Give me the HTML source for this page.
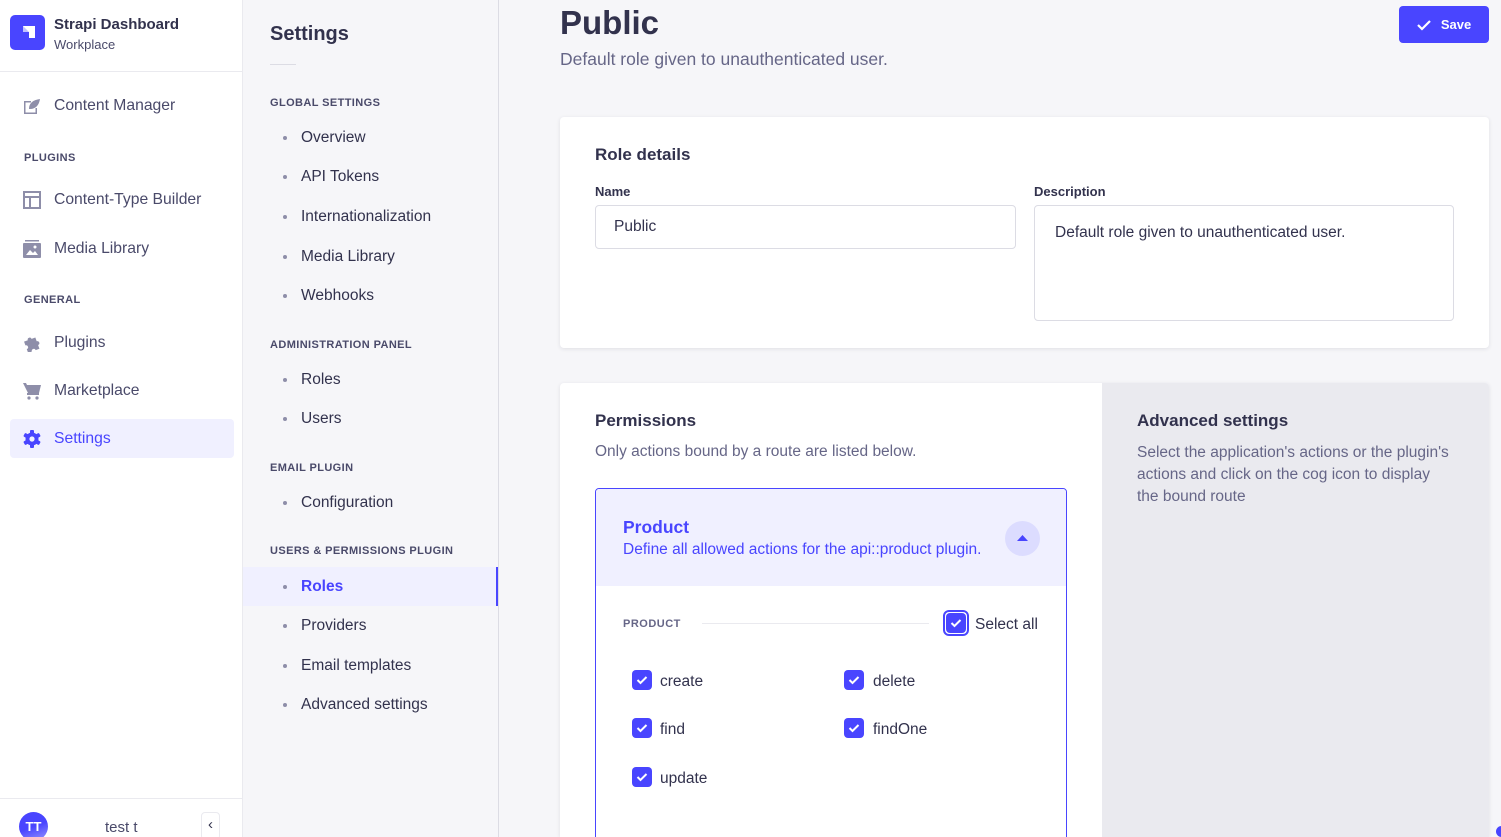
<!DOCTYPE html>
<html><head><meta charset="utf-8"><style>
*{box-sizing:border-box;margin:0;padding:0}
html,body{width:1501px;height:837px;overflow:hidden}
body{background:#f6f6f9;font-family:"Liberation Sans",sans-serif;color:#32324d;position:relative}
.abs{position:absolute}
.nav{left:0;top:0;width:243px;height:837px;background:#fff;border-right:1px solid #eaeaef}
.navitem{position:absolute;left:10px;width:224px;height:39px;display:flex;align-items:center;padding-left:13px;font-size:15.7px;color:#4a4a6a}
.navitem svg{margin-right:13px}
.sec{position:absolute;left:24px;font-size:11px;font-weight:bold;color:#4a4a6a;letter-spacing:.4px}
.sub{left:243px;top:0;width:256px;height:837px;background:#f6f6f9;border-right:1px solid #dcdce4}
.sh{position:absolute;left:27px;font-size:11px;font-weight:bold;color:#4a4a6a;letter-spacing:.4px}
.si{position:absolute;left:0;width:255px;height:38px;display:flex;align-items:center;padding-left:40px;font-size:15.5px;color:#32324d}
.si:before{content:"";position:absolute;left:40px;width:4px;height:4px;border-radius:50%;background:#8e8ea9}
.si span{margin-left:18px}
.card{background:#fff;border-radius:4px;box-shadow:0 1px 4px rgba(33,33,52,.1)}
.lbl{font-size:13px;font-weight:bold;color:#32324d}
.inp{border:1px solid #dcdce4;border-radius:4px;background:#fff;font-size:15.5px;color:#32324d}
.cb{position:absolute;width:20px;height:20px;border-radius:4px;background:#4945ff;display:flex;align-items:center;justify-content:center}
.cbl{position:absolute;font-size:15.5px;color:#32324d}
</style></head><body>
<div class="abs nav">
  <div class="abs" style="left:10px;top:15px;width:35px;height:35px;background:#4945ff;border-radius:5px">
    <svg width="35" height="35" viewBox="0 0 35 35"><path d="M13 11h12v12h-6v-6h-6z" fill="#fff"/><path d="M13 11v6h6z" fill="#c0c0ff"/></svg>
  </div>
  <div class="abs" style="left:54px;top:16px;font-size:15px;font-weight:bold;color:#32324d">Strapi Dashboard</div>
  <div class="abs" style="left:54px;top:37px;font-size:13px;color:#4a4a6a">Workplace</div>
  <div class="abs" style="left:0;top:71px;width:242px;height:1px;background:#eaeaef"></div>
  <div class="navitem" style="top:86px"><svg width="18" height="18" viewBox="0 0 18 18"><path d="M1 4h7v1.5H2.5v10h10V11H14v6H1z M6 12c0-6 4-9 11-10-1 6-4 10-10 10z" fill="#8e8ea9"/></svg>Content Manager</div>
  <div class="sec" style="top:152px">PLUGINS</div>
  <div class="navitem" style="top:180px"><svg width="18" height="18" viewBox="0 0 18 18"><path d="M0 0h18v18H0zM2 2v3h14V2zM2 7v9h4V7zM8 7v9h8V7z" fill="#8e8ea9" fill-rule="evenodd"/></svg>Content-Type Builder</div>
  <div class="navitem" style="top:229px"><svg width="18" height="18" viewBox="0 0 18 18"><rect x="2" y="0" width="14" height="1.5" fill="#8e8ea9"/><rect x="0" y="3" width="18" height="15" rx="1" fill="#8e8ea9"/><path d="M3 15l4-5 3 3 2-2 3 4z" fill="#fff"/><circle cx="12" cy="7" r="1.5" fill="#fff"/></svg>Media Library</div>
  <div class="sec" style="top:294px">GENERAL</div>
  <div class="navitem" style="top:323px"><svg width="18" height="18" viewBox="0 0 18 18"><path d="M2 5h4a2 2 0 1 1 4 0h4v4a2 2 0 1 1 0 4v4h-4a2 2 0 1 0-4 0H2v-4a2 2 0 1 0 0-4z" fill="#8e8ea9" transform="rotate(-20 9 9)"/></svg>Plugins</div>
  <div class="navitem" style="top:371px"><svg width="18" height="18" viewBox="0 0 18 18"><path d="M0 1h3l1 2h14l-2 8H5z" fill="#8e8ea9"/><path d="M4 11h12v2H4z" fill="#8e8ea9"/><circle cx="6" cy="16" r="1.6" fill="#8e8ea9"/><circle cx="14" cy="16" r="1.6" fill="#8e8ea9"/></svg>Marketplace</div>
  <div class="navitem" style="top:419px;background:#f0f0ff;color:#4945ff;border-radius:4px"><svg width="18" height="18" viewBox="0 0 18 18"><circle cx="9" cy="9" r="6.5" fill="#4945ff"/><g fill="#4945ff"><rect x="7" y="0" width="4" height="18" rx="1"/><rect x="7" y="0" width="4" height="18" rx="1" transform="rotate(60 9 9)"/><rect x="7" y="0" width="4" height="18" rx="1" transform="rotate(120 9 9)"/></g><circle cx="9" cy="9" r="2.6" fill="#f0f0ff"/></svg>Settings</div>
  <div class="abs" style="left:0;top:798px;width:242px;height:1px;background:#eaeaef"></div>
  <div class="abs" style="left:19px;top:812px;width:29px;height:29px;border-radius:50%;background:linear-gradient(160deg,#4945ff 50%,#9a98ff);color:#fff;font-size:13px;font-weight:bold;text-align:center;line-height:29px">TT</div>
  <div class="abs" style="left:105px;top:819px;font-size:15px;color:#4a4a6a">test t</div>
  <div class="abs" style="left:201px;top:812px;width:19px;height:28px;border:1px solid #eaeaef;border-radius:4px;background:#fff;font-size:15px;color:#32324d;text-align:center;line-height:24px">&#8249;</div>
</div>
<div class="abs sub">
  <div class="abs" style="left:27px;top:23px;font-size:20px;font-weight:bold;color:#32324d">Settings</div>
  <div class="abs" style="left:27px;top:64px;width:26px;height:1px;background:#dcdce4"></div>
  <div class="sh" style="top:97px">GLOBAL SETTINGS</div>
  <div class="si" style="top:119px"><span>Overview</span></div>
  <div class="si" style="top:158px"><span>API Tokens</span></div>
  <div class="si" style="top:198px"><span>Internationalization</span></div>
  <div class="si" style="top:238px"><span>Media Library</span></div>
  <div class="si" style="top:277px"><span>Webhooks</span></div>
  <div class="sh" style="top:339px">ADMINISTRATION PANEL</div>
  <div class="si" style="top:361px"><span>Roles</span></div>
  <div class="si" style="top:400px"><span>Users</span></div>
  <div class="sh" style="top:462px">EMAIL PLUGIN</div>
  <div class="si" style="top:484px"><span>Configuration</span></div>
  <div class="sh" style="top:545px">USERS &amp; PERMISSIONS PLUGIN</div>
  <div class="si" style="top:567px;height:39px;background:#f0f0ff;color:#4945ff;border-right:2px solid #4945ff"><span style="font-weight:bold">Roles</span></div>
  <div class="si" style="top:607px"><span>Providers</span></div>
  <div class="si" style="top:647px"><span>Email templates</span></div>
  <div class="si" style="top:686px"><span>Advanced settings</span></div>
</div>
<div class="abs" style="left:560px;top:4px;font-size:33px;font-weight:bold;color:#32324d">Public</div>
<div class="abs" style="left:560px;top:49px;font-size:17.5px;color:#666687">Default role given to unauthenticated user.</div>
<div class="abs" style="left:1399px;top:6px;width:90px;height:37px;background:#4945ff;border-radius:4px;color:#fff;font-size:13px;font-weight:bold;display:flex;align-items:center;justify-content:center"><svg width="14" height="12" viewBox="0 0 14 12" style="margin-right:10px"><path d="M1 6l4 4 8-8" stroke="#fff" stroke-width="2.2" fill="none"/></svg>Save</div>

<div class="abs card" style="left:560px;top:117px;width:929px;height:231px">
  <div class="abs" style="left:35px;top:28px;font-size:17px;font-weight:bold">Role details</div>
  <div class="abs lbl" style="left:35px;top:67px">Name</div>
  <div class="abs inp" style="left:35px;top:88px;width:421px;height:44px;padding:12px 18px">Public</div>
  <div class="abs lbl" style="left:474px;top:67px">Description</div>
  <div class="abs inp" style="left:474px;top:88px;width:420px;height:116px;padding:18px 20px">Default role given to unauthenticated user.</div>
</div>

<div class="abs card" style="left:560px;top:383px;width:929px;height:454px;overflow:hidden;border-radius:4px 4px 0 0">
  <div class="abs" style="left:542px;top:0;width:387px;height:454px;background:#eaeaef"></div>
  <div class="abs" style="left:35px;top:28px;font-size:17px;font-weight:bold">Permissions</div>
  <div class="abs" style="left:35px;top:60px;font-size:15.5px;color:#666687">Only actions bound by a route are listed below.</div>
  <div class="abs" style="left:577px;top:28px;font-size:17px;font-weight:bold">Advanced settings</div>
  <div class="abs" style="left:577px;top:59px;width:318px;font-size:15.5px;line-height:22px;color:#666687">Select the application's actions or the plugin's actions and click on the cog icon to display the bound route</div>
  <div class="abs" style="left:35px;top:105px;width:472px;height:400px;border:1px solid #4945ff;border-radius:4px;overflow:hidden">
    <div class="abs" style="left:0;top:0;width:472px;height:97px;background:#f0f0ff"></div>
    <div class="abs" style="left:27px;top:28px;font-size:17.5px;font-weight:bold;color:#4945ff">Product</div>
    <div class="abs" style="left:27px;top:52px;font-size:15.5px;color:#4945ff">Define all allowed actions for the api::product plugin.</div>
    <div class="abs" style="left:409px;top:32px;width:35px;height:35px;border-radius:50%;background:#dcdcff"><svg width="35" height="35" viewBox="0 0 35 35"><path d="M12 20l5.5-6 5.5 6z" fill="#4945ff"/></svg></div>
    <div class="abs" style="left:27px;top:129px;font-size:11px;font-weight:bold;color:#666687;letter-spacing:.5px">PRODUCT</div>
    <div class="abs" style="left:106px;top:134px;width:227px;height:1px;background:#eaeaef"></div>
    <div class="abs" style="left:347px;top:121px;width:26px;height:26px;border:2px solid #4945ff;border-radius:6px;padding:1px"><div style="width:20px;height:20px;background:#4945ff;border-radius:4px"><svg width="20" height="20" viewBox="0 0 20 20"><path d="M5.5 10l3 3 6-6" stroke="#fff" stroke-width="2" fill="none"/></svg></div></div>
    <div class="cbl" style="left:379px;top:127px">Select all</div>
    <div class="cb" style="left:36px;top:181px"><svg width="20" height="20" viewBox="0 0 20 20"><path d="M5.5 10l3 3 6-6" stroke="#fff" stroke-width="2" fill="none"/></svg></div><div class="cbl" style="left:64px;top:184px">create</div>
    <div class="cb" style="left:248px;top:181px"><svg width="20" height="20" viewBox="0 0 20 20"><path d="M5.5 10l3 3 6-6" stroke="#fff" stroke-width="2" fill="none"/></svg></div><div class="cbl" style="left:277px;top:184px">delete</div>
    <div class="cb" style="left:36px;top:229px"><svg width="20" height="20" viewBox="0 0 20 20"><path d="M5.5 10l3 3 6-6" stroke="#fff" stroke-width="2" fill="none"/></svg></div><div class="cbl" style="left:64px;top:232px">find</div>
    <div class="cb" style="left:248px;top:229px"><svg width="20" height="20" viewBox="0 0 20 20"><path d="M5.5 10l3 3 6-6" stroke="#fff" stroke-width="2" fill="none"/></svg></div><div class="cbl" style="left:277px;top:232px">findOne</div>
    <div class="cb" style="left:36px;top:278px"><svg width="20" height="20" viewBox="0 0 20 20"><path d="M5.5 10l3 3 6-6" stroke="#fff" stroke-width="2" fill="none"/></svg></div><div class="cbl" style="left:64px;top:281px">update</div>
  </div>
</div>
<div class="abs" style="left:1496px;top:826px;width:11px;height:11px;border-radius:50%;background:#4945ff"></div>
</body></html>
